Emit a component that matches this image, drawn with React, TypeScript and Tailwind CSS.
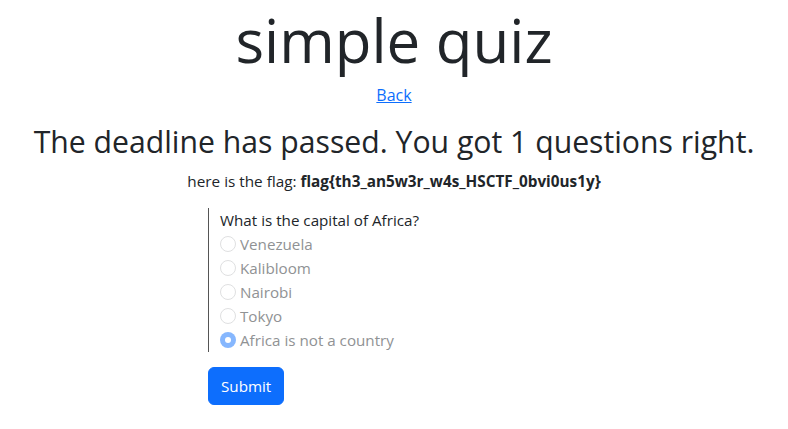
import React from 'react';

const options = ['Venezuela', 'Kalibloom', 'Nairobi', 'Tokyo', 'Africa is not a country'];

export default function App() {
  return (
    <div className="min-h-screen bg-white text-[#212529] font-['Open_Sans',sans-serif]">
      <div className="text-center">
        <h1 className="text-[60px] font-normal leading-[80px]">simple quiz</h1>
        <a href="#" className="mt-[3px] inline-block text-base leading-6 text-[#0d6efd] underline">
          Back
        </a>
        <h2 className="mt-[17px] text-[30.2px] font-normal leading-9">
          The deadline has passed. You got 1 questions right.
        </h2>
        <p className="mt-[9px] text-[15.3px] leading-6">
          here is the flag: <b>flag{'{'}th3_an5w3r_w4s_HSCTF_0bvi0us1y{'}'}</b>
        </p>
      </div>
      <form className="mx-auto mt-[15px] w-[372px]" onSubmit={(e) => e.preventDefault()}>
        <fieldset className="border-l border-[#555] pl-[11px] text-[15.2px] leading-6">
          <div>What is the capital of Africa?</div>
          {options.map((o, i) => (
            <label key={o} className="flex items-center gap-1 text-[#909294]">
              <span
                className={
                  i === 4
                    ? 'flex h-4 w-4 items-center justify-center rounded-full bg-[#86b7fe]'
                    : 'h-4 w-4 rounded-full border border-[#dfe0e1]'
                }
              >
                {i === 4 ? <span className="h-1.5 w-1.5 rounded-full bg-white" /> : null}
              </span>
              {o}
            </label>
          ))}
        </fieldset>
        <button className="mt-[15px] rounded-md border border-[#0d6efd] bg-[#0d6efd] px-3 py-1.5 text-[15.2px] leading-6 text-white">
          Submit
        </button>
      </form>
    </div>
  );
}
